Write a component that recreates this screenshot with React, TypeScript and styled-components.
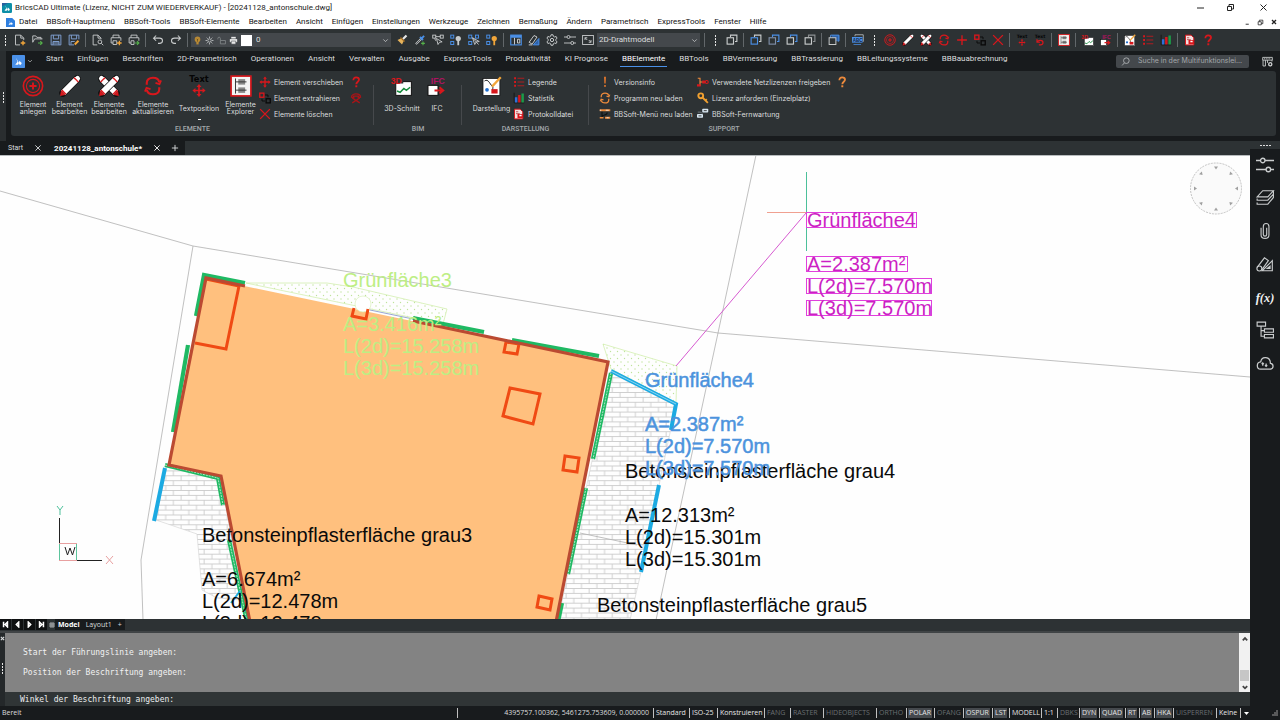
import React from "react";
import styled, { createGlobalStyle, css } from "styled-components";

const color = {
  panel: "#2d3234",
  dark: "#181b1d",
  field: "#44484c",
  text: "#dcdedf",
  red: "#d8171c",
  blue: "#4a90e8",
  line: "#c9cccd",
  amber: "#f2a63a",
};

const ui = `"Open Sans", "Noto Sans", sans-serif`;
const tabFont = `Roboto, "Open Sans", sans-serif`;
const labelFont = `Inter, Roboto, sans-serif`;

const GlobalStyle = createGlobalStyle`
  * { box-sizing: border-box; }
  html, body { margin: 0; padding: 0; background: ${color.dark}; }
  button, input, select { font: inherit; color: inherit; border: 0; padding: 0; margin: 0; background: none; }
  button { display: flex; align-items: center; cursor: pointer; }
`;

/* ---------- icons, all on a 16 × 16 grid ---------- */

const R = color.red;
const L = color.line;
const B = color.blue;
const A = color.amber;

const twoSquares = (back: string, front: string) => (
  <g fill="none" strokeWidth="1.5">
    <path d="M6 4V1.5h8.500V10H12" stroke={back} />
    <rect x="1.500" y="5" width="8.500" height="8.500" stroke={front} />
  </g>
);

const pencil = (
  <g>
    <path d="M2.800 13.200L13.200 2.800" stroke="#111" strokeWidth="5.200" strokeLinecap="round" />
    <path d="M3 13L13 3" stroke="#fff" strokeWidth="4.200" />
    <path d="M.8 15.200l.7-3.700 3 3z" fill={R} />
    <path d="M2 11l3 3M11 2l3 3" stroke={R} strokeWidth="1.200" />
    <path d="M13 3l.5-.5" stroke="#fff" strokeWidth="3.600" strokeLinecap="round" />
    <path d="M11 2l3 3" stroke={R} strokeWidth="1" />
  </g>
);

const reload = (c: string) => (
  <g fill="none" stroke={c} strokeWidth="1.700">
    <path d="M3 7V5.500C3 3 5 1.400 8 1.400s4.600 1.200 5 3.600" />
    <path d="M13 9v1.500c0 2.500-2 4.100-5 4.100s-4.600-1.200-5-3.600" />
    <path d="M10 5.500l3.200 1 1.300-3M6 10.500l-3.200-1-1.300 3" strokeWidth="1.400" />
  </g>
);

const question = (c: string) => (
  <g>
    <path d="M4.500 5.500C4.500 3 6 1.800 8.200 1.800c2.300 0 3.800 1.300 3.800 3.200 0 2.600-3.600 2.800-3.600 6" fill="none" stroke={c} strokeWidth="2.400" />
    <rect x="7.100" y="12.400" width="2.600" height="2.600" fill={c} />
  </g>
);

const squares4 = (
  <g fill="none" stroke={B} strokeWidth="1.300">
    <rect x="1" y="1.500" width="4" height="4" />
    <rect x="1" y="10" width="4" height="4" />
  </g>
);

const icons: Record<string, React.ReactNode> = {
  brics: (
    <g>
      <rect width="16" height="16" rx="1" fill={B} />
      <path d="M5 3.500l1.800 4.800L4 12h3.500l1-2.200zM9 7l3 2.800-1 2.200h-1.800L8.500 10z" fill="#fff" />
    </g>
  ),
  bricsDoc: (
    <g>
      <path d="M0 0h11l5 5v11H0z" fill="#2f7fe0" />
      <path d="M5.500 4l1.500 4.300L4.500 12H8l.8-2zM9.200 7.500l2.800 2.400L11 12H9.500L8.500 10z" fill="#fff" />
    </g>
  ),
  bricsApp: (
    <g>
      <rect width="16" height="16" rx="2" fill="#0d8fa8" />
      <path d="M0 16V5L10 0H0z" fill="#2a5f9f" />
      <path d="M5 3.500l1.800 4.800L4 12.500h3.500l1-2.200zM9.500 7l3 2.800-1 2.700H9.500L8.500 10z" fill="#fff" />
    </g>
  ),
  fileNew: (
    <g fill="none" stroke={L} strokeWidth="1.200">
      <path d="M8 14.500H2v-13h7l4 4V8M9 1.500v4h4" />
      <path d="M12 9v6M9 12h6" stroke={A} strokeWidth="1.800" />
    </g>
  ),
  fileOpen: (
    <g fill="none" stroke={L} strokeWidth="1.200">
      <path d="M1 11V2.500h4l1.500 2H12V7M1 11l2.500-4.500H14" />
      <path d="M8 12h5m-2-2.500L13.500 12 11 14.500" stroke="#55b04a" strokeWidth="1.500" />
    </g>
  ),
  save: (
    <g fill="none" stroke="#7f9fd0" strokeWidth="1.300">
      <path d="M1.500 1.500h13v13h-13z" />
      <path d="M4.500 1.500v5h7v-5M4 14.500V10h8v4.500M4 12h8" />
    </g>
  ),
  saveAs: (
    <g fill="none" stroke="#7f9fd0" strokeWidth="1.300">
      <path d="M14.500 7V1.500h-13v13H8" />
      <path d="M4.500 1.500v5h7v-5M4 14V10h5" />
      <path d="M9 14l5-5" stroke={A} strokeWidth="2.500" />
    </g>
  ),
  preview: (
    <g fill="none" stroke={L} strokeWidth="1.200">
      <path d="M7 14.500H1.500v-13H8l4 4V7M8 1.500v4h4" />
      <circle cx="10.500" cy="10.500" r="2.500" />
      <path d="M12.500 12.500L15 15" />
    </g>
  ),
  print: (
    <g fill="none" stroke={L} strokeWidth="1.200">
      <path d="M4 5V1.500h8V5M4 12H1.500V5h13v4M4 9h5v5H4z" />
      <path d="M12.500 9v6M9.500 12h6" stroke={A} strokeWidth="1.800" />
    </g>
  ),
  publish: (
    <g fill="none" stroke={L} strokeWidth="1.200">
      <path d="M4 5V1.500h8V5M4 12H1.500V5h13v4M4 9h4v5H4z" />
      <path d="M9 12h5m-2-2.500l2.500 2.500-2.500 2.500" stroke="#55b04a" strokeWidth="1.500" />
    </g>
  ),
  undo: <path d="M5.500 2L2 5.500 5.500 9M2 5.500h8c2.500 0 4 1.500 4 3.500s-1.500 3.500-4 3.500H8" fill="none" stroke={L} strokeWidth="1.400" />,
  redo: <path d="M10.500 2L14 5.500 10.500 9M14 5.500H6C3.500 5.500 2 7 2 9s1.500 3.500 4 3.500h2" fill="none" stroke={L} strokeWidth="1.400" />,
  bulb: (
    <g fill="#b98a35">
      <circle cx="8" cy="6" r="5" />
      <rect x="6" y="10.500" width="4" height="4.500" />
      <path d="M8 10V6M6.500 5L8 6.500 9.500 5" stroke="#4a3a18" fill="none" />
    </g>
  ),
  sun: (
    <g stroke={L} strokeWidth="1.500" fill="none">
      <circle cx="8" cy="8" r="3" />
      <path d="M8 1v2.500M8 12.500V15M1 8h2.500M12.500 8H15M3 3l1.800 1.800M11.200 11.200L13 13M13 3l-1.800 1.800M4.800 11.200L3 13" />
    </g>
  ),
  lock: <path d="M6 14h9V8H6zM6 8V4.500C6 3 5 2 3.700 2S1.500 3 1.500 4.500V6" fill="none" stroke="#8b9092" strokeWidth="1.300" />,
  printer: (
    <g fill="#e8e8e8">
      <rect x="4" y="1.500" width="8" height="3" />
      <path d="M1.500 5.500h13V11h-13z" />
      <path d="M4 9h8v5.500H4z" stroke={color.field} />
    </g>
  ),
  brush: (
    <g>
      <path d="M2 8l5-2.500L10.500 9 8 14z" fill="#e6b35c" />
      <path d="M9 7l5-5" stroke="#e8e8e8" strokeWidth="2.800" />
      <path d="M6 4.500l5.500 5.500" stroke="#a06a20" strokeWidth="1.600" />
    </g>
  ),
  dropper: (
    <g>
      <path d="M2.500 13.500L10 6" stroke={L} strokeWidth="2.600" />
      <path d="M3 13l6-6" stroke="#2d3234" strokeWidth="1" />
      <path d="M8 4l4 4M10.500 5.500L13.500 2.500" stroke={B} strokeWidth="2.500" />
      <path d="M12 10v5M9.500 12.500h5" stroke="#55b04a" strokeWidth="1.500" />
    </g>
  ),
  select: (
    <g fill="none" stroke={L} strokeWidth="1.200">
      <rect x="1" y="1.500" width="4" height="4" />
      <rect x="11" y="1.500" width="4" height="4" />
      <path d="M5 3.500h6M3.500 6l1.500 3M6 6l2 8 2-3 3.500-.5z" />
    </g>
  ),
  isolate: (
    <g>
      {squares4}
      <circle cx="11" cy="6" r="3.500" fill={L} />
      <rect x="9.800" y="9" width="2.400" height="6" fill={L} />
    </g>
  ),
  deselect: (
    <g>
      {squares4}
      <rect x="10" y="1.500" width="4" height="4" fill="none" stroke={B} strokeWidth="1.300" />
      <path d="M6 5l3 9 2-3.500 4-.5zM6 5l8 9" fill="none" stroke={L} strokeWidth="1.200" />
    </g>
  ),
  unisolate: (
    <g>
      {squares4}
      <circle cx="11" cy="6" r="3.500" fill={A} />
      <rect x="9.800" y="9" width="2.400" height="6" fill={A} />
    </g>
  ),
  table: (
    <g>
      <rect x="1" y="1.500" width="14" height="13" fill="none" stroke={B} strokeWidth="1.500" />
      <rect x="1" y="1.500" width="14" height="3.500" fill={B} />
      <path d="M6 5v9M10 7v5h3V7z" stroke={L} fill="none" strokeWidth="1.300" />
    </g>
  ),
  parts: (
    <g fill="none" strokeWidth="1.300">
      <path d="M1.500 11L8 2l4 2-6.500 9.500z" stroke={L} />
      <path d="M7 14.500h7.500V6z" stroke={B} fill="#2f62a8" />
      <path d="M1 14.500h5" stroke={L} />
    </g>
  ),
  gear: (
    <g fill="none" stroke={L} strokeWidth="1.300">
      <path d="M6.700 1h2.600l.5 2 1.700 1 2-.7 1.200 2.200-1.500 1.500v2l1.500 1.500-1.200 2.200-2-.7-1.700 1-.5 2H6.700l-.5-2-1.700-1-2 .7-1.200-2.200L2.800 9V7L1.300 5.500l1.200-2.200 2 .7 1.700-1z" />
      <circle cx="8" cy="8" r="2.200" />
    </g>
  ),
  sliders: (
    <g fill="none" stroke={L} strokeWidth="1.200">
      <path d="M0 4h4M8 4h8M0 12h9M13 12h3" />
      <circle cx="6" cy="4" r="2" />
      <circle cx="11" cy="12" r="2" />
    </g>
  ),
  screen: (
    <g fill="none" stroke={L} strokeWidth="1.200">
      <rect x=".8" y="2" width="14.400" height="12" />
      <path d="M4 8V5h3M12 8v3H9M4 5l3 3M12 11L9 8" />
    </g>
  ),
  sqGrey: twoSquares(L, L),
  sqFront: twoSquares(L, B),
  sqBack: twoSquares(B, "#7f8fa8"),
  sqAbove: twoSquares(B, L),
  sqUnder: twoSquares("#8c9092", L),
  sqFilled: (
    <g>
      <rect x="5" y="1.500" width="10" height="8" fill="#2f62a8" />
      <g fill="none" stroke={L} strokeWidth="1.300">
        <path d="M3.500 5V1.500h11v8H13" stroke={B} />
        <rect x="1.500" y="5" width="9" height="9" fill={color.panel} />
      </g>
    </g>
  ),
  abc: (
    <g>
      <path d="M4 3V1h11v9h-1" stroke={L} fill="none" />
      <rect x="0" y="4" width="14" height="7.500" fill={B} />
      <text x="1" y="10" fontSize="6" fontWeight="700" fontFamily="Liberation Sans, sans-serif" fill="#14243c">ABC</text>
      <path d="M2 14h10" stroke={B} />
    </g>
  ),
  create: (
    <g fill="none" stroke={R}>
      <circle cx="8" cy="8" r="7" strokeWidth="1.200" />
      <circle cx="8" cy="8" r="4.800" strokeWidth=".8" />
      <path d="M8 5.400v5.200M5.400 8h5.200" strokeWidth="1.400" />
    </g>
  ),
  pencil,
  pencils: (
    <g>
      <g transform="matrix(-1 0 0 1 16 0)">{pencil}</g>
      {pencil}
    </g>
  ),
  reload: reload(R),
  reloadAmber: reload("#ec8a3c"),
  move: <path d="M8 .5l2.500 3H8.900v3.600h3.600V5.500l3 2.500-3 2.500V8.900H8.900v3.600h1.600L8 15.500l-2.500-3h1.600V8.900H3.500v1.600L.5 8l3-2.500v1.600h3.600V3.500H5.500z" fill={R} />,
  plus: <path d="M8 1.500v13M1.500 8h13" stroke={R} strokeWidth="1.800" />,
  extract: (
    <g fill="none" strokeWidth="1.800">
      <rect x="1" y="1.500" width="5.500" height="5.500" stroke={R} />
      <rect x="9.500" y="9" width="5.500" height="5.500" stroke="#0a0a0a" />
      <path d="M8 4h4v3M4 9v3h4" stroke="#0a0a0a" strokeWidth="1.200" />
    </g>
  ),
  cross: <path d="M1.500 1.500l13 13M14.500 1.500l-13 13" stroke={R} strokeWidth="1.800" />,
  textPos: (
    <g>
      <text x="8" y="5" fontSize="6" fontWeight="700" textAnchor="middle" fontFamily="DejaVu Sans, sans-serif" fill="#050505">Text</text>
      <path d="M8 6.500l1.800 2.200H8.600v2h2V9.500l2.200 1.800-2.200 1.800v-1.200h-2v2h1.200L8 16l-1.800-2.100h1.200v-2h-2v1.200l-2.200-1.800 2.200-1.800v1.200h2v-2H6.200z" fill={R} />
    </g>
  ),
  textBack: (
    <g>
      <text x="8" y="5" fontSize="6" fontWeight="700" textAnchor="middle" fontFamily="DejaVu Sans, sans-serif" fill="#050505">Text</text>
      <path d="M4 7v4h4M4.500 10.500C5.500 8 12 7.500 12 11.500c0 2-2 3-5.500 3" fill="none" stroke={R} strokeWidth="1.600" />
    </g>
  ),
  explorer: (
    <g>
      <rect x=".8" y=".8" width="14.400" height="14.400" fill="#f4f4f4" stroke={R} strokeWidth="1.200" />
      <rect x="6" y="3" width="5" height="4" fill="#888" />
      <rect x="6" y="9" width="5" height="4" fill="#888" />
      <path d="M4 2.500v11M4 5h8M4 11h8" stroke="#333" strokeWidth=".7" />
    </g>
  ),
  section3d: (
    <g>
      <rect x="3" y="4.500" width="12.500" height="11" fill="#fff" stroke="#111" strokeWidth=".8" />
      <rect x="0" y="0" width="9" height="6" fill={color.panel} />
      <text x="-1" y="6" fontSize="7" fontWeight="700" fontFamily="Liberation Sans, sans-serif" fill={R}>3D</text>
      <path d="M4 12l2.500 1 3-3 2 1.500 3-2.500" stroke="#168a3c" fill="none" strokeWidth="1.200" />
    </g>
  ),
  ifc: (
    <g>
      <text x="3" y="6" fontSize="7" fontWeight="700" fontFamily="Liberation Sans, sans-serif" fill="#b01260">IFC</text>
      <rect x=".8" y="7.500" width="8" height="8" fill="#fff" stroke="#111" strokeWidth=".8" />
      <path d="M6 11.500h6m-2-2.500l3 2.500-3 2.500" stroke={R} fill="none" strokeWidth="1.600" />
    </g>
  ),
  display: (
    <g>
      <rect x=".8" y="2" width="13.500" height="13.500" fill="#fff" stroke="#111" strokeWidth=".6" />
      <path d="M2 4c3-2 4 2 6 4s-1 3 1 4" stroke="#111" fill="none" strokeWidth=".8" />
      <circle cx="4" cy="11" r="1.500" fill="#1f6fd0" />
      <rect x="7.500" y="10.500" width="5" height="3.500" fill={R} />
      <path d="M8 8.500l7-7.500" stroke={A} strokeWidth="1.800" />
    </g>
  ),
  legend: (
    <g stroke={R} strokeWidth="1.600">
      <path d="M6 3h9M6 8h9M6 13h9" strokeWidth="1" />
      <path d="M1.500 3H4M1.500 8H4M1.500 13H4" strokeWidth="2.600" />
    </g>
  ),
  stats: (
    <g>
      <path d="M1.500 1v13.500H15" stroke="#111" fill="none" />
      <rect x="2.500" y="7" width="3.300" height="7" fill="#2f6fd8" />
      <rect x="6.800" y="4" width="3.300" height="10" fill={R} />
      <rect x="11.200" y="2" width="3.300" height="12" fill="#1c9a48" />
    </g>
  ),
  protocol: (
    <g>
      <path d="M2 1.500h7.500L13 5v9.500H2z" fill="#f6dede" stroke={R} strokeWidth="1.300" />
      <path d="M4 5h3M4 7.500h5" stroke="#a33" />
      <rect x="6" y="8" width="7.500" height="5.500" fill={R} />
      <rect x="8.500" y="9" width="3" height="2" fill="#fff" />
    </g>
  ),
  help: question(R),
  helpAmber: question("#ec8a3c"),
  phone: (
    <g fill="none" stroke="#a81418" strokeWidth="1.800">
      <path d="M2 7c0-3 3-4.500 6-4.500S14 4 14 7l-3 .5V5.500H5v2z" />
      <path d="M3 14.500L13 8M13 14.500L3 8" />
    </g>
  ),
  alert: (
    <g fill="#ec7a2c">
      <path d="M6.800 1h2.400l-.4 9H7.200z" />
      <rect x="7" y="12" width="2" height="2.500" />
    </g>
  ),
  menuReload: (
    <g>
      <path d="M1 3h14M8 13h7" stroke="#ec8a3c" strokeWidth="2.800" />
      <path d="M1 3h2M9 3h4M10 13h3" stroke="#f4e4d4" strokeWidth="1.200" />
      <path d="M4 12c0-4 7-1 7-6M4 5v8" stroke="#111" fill="none" strokeWidth="1.400" />
      <path d="M1 13h5" stroke="#ec8a3c" strokeWidth="2" />
    </g>
  ),
  release: (
    <g>
      <path d="M1 3h3v10M4 8h7" stroke="#ec8a3c" fill="none" strokeWidth="1.500" />
      <rect x="0" y="11" width="5" height="3" fill={R} />
      <rect x="7" y="6" width="3.500" height="4" fill={R} />
      <circle cx="13" cy="8" r="2" fill="none" stroke={R} strokeWidth="1.500" />
    </g>
  ),
  key: (
    <g>
      <circle cx="5" cy="5" r="3.200" fill="none" stroke="#f0a030" strokeWidth="2.600" />
      <path d="M7 7l7.500 7.500M11 11.500l2-2" stroke="#f0a030" strokeWidth="2.400" />
    </g>
  ),
  remote: (
    <g>
      <rect x="7" y="1" width="8" height="5" rx="1" fill="#d8e6f0" />
      <rect x="0" y="8" width="8" height="5" rx="1" fill="#d8e6f0" />
      <path d="M9 3.500h4M2 10.500h4M1 15h7M9 8h6" stroke="#333" strokeWidth="1.200" />
      <path d="M1 5.500h4l2 2" stroke="#88929a" fill="none" />
    </g>
  ),
  searchIcon: (
    <g fill="none" stroke="#b4b8ba" strokeWidth="1.500">
      <circle cx="9.500" cy="6.500" r="5" />
      <path d="M6 10.500L2 15" />
    </g>
  ),
  customize: (
    <g fill="none" stroke={L} strokeWidth="1.300">
      <path d="M1 2h14v4H1zM5 6v8.500H1.500V6M8 6v4M14.500 6v2" />
      <path d="M3 4h10" strokeDasharray="1.500 1" />
      <circle cx="12" cy="12" r="2.300" strokeWidth="2" />
    </g>
  ),
  layers: (
    <g fill="none" stroke={L} strokeWidth="1">
      <path d="M6 1.500h9.500L10.500 7H1z" />
      <path d="M15.500 1.500v3L10.500 10H1V8.500M15.500 4.500v3L10.500 13.500H1V12M15.500 7.500l-5 6" />
    </g>
  ),
  clip: <path d="M4.500 5v6.500c0 4 7 4 7 0V4c0-3.500-5-3.500-5 0v7c0 2 3 2 3 0V5" fill="none" stroke={L} strokeWidth="1" />,
  library: (
    <g fill="none" stroke={L} strokeWidth="1">
      <path d="M1 11L7.500 2.500 11 5l-6 8.500" />
      <circle cx="3" cy="12" r="2.200" />
      <path d="M14.500 5v9H5.500zM12.500 10v2h-2.500z" />
    </g>
  ),
  fx: (
    <text x="8" y="12" fontSize="11" fontWeight="700" fontStyle="italic" textAnchor="middle" fontFamily="Liberation Serif, serif" fill="#f0f0f0">f(x)</text>
  ),
  structure: (
    <g fill="none" stroke={L} strokeWidth="1">
      <path d="M1 1h7.500v3.500H1zM7.500 7h8v3h-8zM7.500 12h8v3h-8zM4.500 4.500v9h3M4.500 8.500h3" />
    </g>
  ),
  cloud: (
    <g fill="none" stroke={L} strokeWidth="1.100">
      <path d="M4 13.500h8.500c3.500 0 3.500-5 .3-5.200C12.800 2 5 1.500 4.200 7 .2 7.300.2 13.200 4 13.500z" />
      <path d="M6 10.500V8M5 9l1-1 1 1M9 8.500V11M8 10l1 1 1-1" />
    </g>
  ),
  chevron: <path d="M3 5.500l5 5 5-5" fill="none" stroke={L} strokeWidth="1.800" />,
};

const Svg = styled.svg`
  display: block;
  flex: none;
  overflow: visible;
`;

const Icon = ({ name, size = 12 }: { name: string; size?: number }) => (
  <Svg width={size} height={size} viewBox="0 0 16 16" aria-hidden="true">
    {icons[name]}
  </Svg>
);

/* ---------- window frame ---------- */

const Window = styled.div`
  display: flex;
  flex-direction: column;
  height: 100vh;
  font-family: ${ui};
  color: ${color.text};
  overflow: hidden;
`;

const TitleBar = styled.header`
  display: flex;
  align-items: center;
  height: 15px;
  padding: 0 0 0 2px;
  gap: 3px;
  background: #fff;
  color: #1a1a1a;
  font-family: ${tabFont};
`;

const Title = styled.h1`
  flex: 1;
  margin: 0;
  font-size: 8px;
  font-weight: 400;
  line-height: 14px;
`;

const WindowButton = styled.button<{ $w: number }>`
  width: ${(p) => p.$w}px;
  height: 14px;
  justify-content: center;
  color: #222;
`;

const MenuBar = styled.nav`
  display: flex;
  align-items: center;
  height: 14px;
  padding-left: 6px;
  background: #fff;
  color: #111;
  font-family: ${tabFont};
  font-size: 8px;
  line-height: 12px;
`;

const MenuList = styled.div`
  display: flex;
  flex: 1;
  gap: 9px;
  padding-left: 4px;
`;

const Bar = styled.div`
  display: flex;
  align-items: center;
  height: 22px;
  background: ${color.panel};
`;

const ToolButton = styled.button`
  width: 18px;
  height: 20px;
  justify-content: center;
  flex: none;
`;

const Separator = styled.span`
  width: 6px;
  height: 14px;
  flex: none;
  background: linear-gradient(90deg, transparent 2px, #62676a 2px, #62676a 3px, transparent 3px);
`;

const Grip = styled.span<{ $w: number }>`
  width: ${(p) => p.$w}px;
  height: 11px;
  flex: none;
  display: flex;
  justify-content: center;
  &::before {
    content: "";
    width: 1px;
    background: repeating-linear-gradient(180deg, #e4e4e4 0 2px, transparent 2px 3px);
  }
`;

const Combo = styled.label<{ $w: number }>`
  display: flex;
  align-items: center;
  width: ${(p) => p.$w}px;
  height: 14px;
  margin: 0 2px 0 0;
  padding: 0 2px;
  flex: none;
  background: ${color.field};
  font-family: ${tabFont};
  font-size: 8px;
  select {
    appearance: none;
    flex: 1;
    min-width: 0;
    line-height: 12px;
    outline: none;
  }
  option { color: #000; }
`;

const Swatch = styled.span`
  width: 11px;
  height: 11px;
  margin: 0 4px 0 3px;
  background: #fff;
`;

const LayerStates = styled.span`
  display: flex;
  gap: 3px;
`;

/* ---------- ribbon ---------- */

const TabStrip = styled.div`
  display: flex;
  align-items: center;
  height: 20px;
  padding: 0 4px 0 12px;
  background: ${color.dark};
  font-family: ${tabFont};
  font-size: 8px;
  line-height: 10px;
`;

const AppButton = styled.button`
  width: 32px;
  gap: 2px;
`;

const Tabs = styled.div`
  display: flex;
  flex: 1;
  gap: 10px;
`;

const Tab = styled.button<{ $active?: boolean }>`
  height: 14px;
  padding: 0 2px;
  margin-top: -3px;
  white-space: nowrap;
  border-bottom: 1px solid ${(p) => (p.$active ? color.blue : "transparent")};
  color: ${(p) => (p.$active ? "#fff" : color.text)};
`;

const SearchBox = styled.label`
  display: flex;
  align-items: center;
  gap: 8px;
  width: 133px;
  height: 13px;
  margin: 0 9px 0 0;
  padding: 0 5px;
  border-radius: 2px;
  background: ${color.field};
  font-family: ${labelFont};
  font-size: 7px;
  input {
    flex: 1;
    min-width: 0;
    outline: none;
    text-overflow: ellipsis;
  }
  input::placeholder { color: #a3a7aa; opacity: 1; }
`;

const RibbonArea = styled.div`
  display: flex;
  padding: 0 4px 5px 0;
  background: ${color.dark};
`;

const RibbonGrip = styled.div`
  display: flex;
  align-items: center;
  justify-content: center;
  width: 6px;
  margin: -20px 5px -5px 0;
  padding-top: 2px;
  background: #2a2e30;
`;

const Ribbon = styled.div`
  display: flex;
  flex: 1;
  height: 65px;
  border-radius: 3px;
  background: ${color.panel};
  font-family: ${labelFont};
  font-size: 7px;
`;

const Group = styled.section<{ $w: number }>`
  position: relative;
  display: flex;
  flex-direction: column;
  width: ${(p) => p.$w}px;
  flex: none;
  &::after {
    content: "";
    position: absolute;
    right: 0;
    top: 14px;
    height: 40px;
    width: 1px;
    background: #46494c;
  }
  &:last-child::after { display: none; }
`;

const GroupBody = styled.div<{ $pad: number }>`
  display: flex;
  height: 53px;
  padding-top: 4px;
  padding-left: ${(p) => p.$pad}px;
`;

const GroupTitle = styled.h2`
  margin: 0;
  font-family: ${tabFont};
  font-size: 7px;
  font-weight: 500;
  line-height: 10px;
  text-align: center;
  color: #a4a8ab;
`;

const BigButton = styled.button<{ $w: number }>`
  flex-direction: column;
  width: ${(p) => p.$w}px;
  height: 46px;
  gap: 3px;
  flex: none;
`;

const BigIcon = styled.span`
  display: flex;
  align-items: center;
  height: 22px;
`;

const BigLabel = styled.span`
  display: flex;
  flex-direction: column;
  justify-content: center;
  height: 16px;
  line-height: 7px;
  text-align: center;
  white-space: nowrap;
`;

const SmallColumn = styled.div<{ $w: number }>`
  display: flex;
  flex-direction: column;
  width: ${(p) => p.$w}px;
  flex: none;
`;

const SmallButton = styled.button`
  height: 16px;
  margin-top: -1px;
  margin-bottom: 1px;
  gap: 3px;
  white-space: nowrap;
`;

const SplitMark = styled.span`
  width: 3px;
  height: 1px;
  background: #fff;
`;

/* ---------- workspace ---------- */

const Body = styled.div`
  display: flex;
  flex: 1;
  min-height: 0;
`;

const Main = styled.main`
  display: flex;
  flex-direction: column;
  flex: 1;
  min-width: 0;
`;

const DocTabs = styled.div`
  display: flex;
  align-items: stretch;
  height: 15px;
  background: ${color.panel};
  border-bottom: 1px solid #b8bcbe;
  font-family: ${tabFont};
  font-size: 7px;
`;

const DocTab = styled.div<{ $active?: boolean }>`
  display: flex;
  align-items: center;
  gap: 11px;
  padding: 0 6px 0 8px;
  background: ${color.dark};
  ${(p) =>
    p.$active &&
    css`
      font-size: 8px;
      font-weight: 700;
      color: #fff;
      padding: 0 2px 0 6px;
    `}
`;

const Glyph = styled.svg`
  display: block;
  fill: none;
  stroke: currentColor;
`;

const Canvas = styled.div`
  flex: 1;
  min-height: 0;
  background: #fefefe;
  svg { display: block; width: 100%; height: 100%; }
`;

const LayoutTabs = styled.div`
  display: flex;
  align-items: center;
  height: 14px;
  padding-bottom: 1px;
  background: ${color.panel};
  border-bottom: 2px solid #404446;
  font-size: 7px;
`;

const NavButton = styled.button`
  width: 11px;
  height: 11px;
  margin-right: 1px;
  justify-content: center;
  background: #0e1011;
  color: #fff;
`;

const GridMark = styled.button`
  width: 7px;
  justify-content: center;
`;

const LayoutTab = styled.button<{ $active?: boolean }>`
  height: 11px;
  padding: 0 3px;
  background: ${color.dark};
  font-weight: ${(p) => (p.$active ? 700 : 400)};
  color: ${(p) => (p.$active ? "#fff" : color.text)};
`;

const Command = styled.section`
  display: flex;
  height: 73px;
  background: #303536;
  font-family: "DejaVu Sans Mono", monospace;
  font-size: 8px;
`;

const CommandEdge = styled.div`
  display: flex;
  flex-direction: column;
  align-items: center;
  width: 5px;
  gap: 22px;
  padding-top: 3px;
  background: #24282a;
`;

const CommandMain = styled.div`
  display: flex;
  flex-direction: column;
  flex: 1;
`;

const History = styled.div`
  display: flex;
  height: 59px;
  background: #838383;
`;

const Lines = styled.div`
  flex: 1;
  padding: 10px 0 0 18px;
  line-height: 20px;
  color: #f2f2f2;
`;

const ScrollTrack = styled.div`
  display: flex;
  flex-direction: column;
  align-items: center;
  width: 11px;
  background: #f1f1f1;
  color: #444;
  button { width: 11px; height: 11px; justify-content: center; }
`;

const ScrollThumb = styled.span`
  width: 9px;
  height: 11px;
  margin-top: auto;
  background: #c6c6c6;
`;

const Prompt = styled.label`
  display: flex;
  align-items: center;
  height: 14px;
  padding-left: 15px;
  gap: 4px;
  color: #eceeee;
  input { flex: 1; outline: none; }
`;

const Sidebar = styled.aside`
  display: flex;
  flex-direction: column;
  align-items: center;
  width: 30px;
  flex: none;
  background: ${color.dark};
`;

const SidebarHandle = styled.div`
  align-self: stretch;
  display: flex;
  align-items: center;
  justify-content: center;
  height: 8px;
  margin-bottom: 7px;
  background: ${color.panel};
  &::before {
    content: "";
    width: 11px;
    height: 1px;
    background: repeating-linear-gradient(90deg, #ddd 0 2px, transparent 2px 3px);
  }
`;

const SideButton = styled.button`
  width: 30px;
  height: 33px;
  padding-bottom: 15px;
  justify-content: center;
`;

const StatusBar = styled.footer`
  display: flex;
  align-items: center;
  height: 14px;
  padding-left: 2px;
  background: ${color.dark};
  font-size: 7px;
  line-height: 10px;
`;

const StatusText = styled.span`
  flex: 1;
`;

const Coordinates = styled.span`
  width: 196px;
  padding-right: 4px;
  text-align: right;
  border-left: 1px solid #c0c0c0;
`;

const Cell = styled.button<{ $w: number; $state: "on" | "off" | "plain" }>`
  width: ${(p) => p.$w}px;
  height: 10px;
  flex: none;
  padding-left: 1px;
  border-left: 1px solid #c0c0c0;
  white-space: nowrap;
  color: ${(p) => (p.$state === "off" ? "#6a6f72" : "#e6e6e6")};
  span {
    padding: 0 1px;
    background: ${(p) => (p.$state === "on" ? "#45494d" : "none")};
  }
`;

const ResizeCorner = styled.span`
  display: flex;
  width: 40px;
  height: 10px;
  justify-content: space-between;
  align-items: center;
  padding: 0 2px 0 3px;
  border-left: 1px solid #c0c0c0;
`;

/* ---------- data ---------- */

const menus = [
  "Datei", "BBSoft-Hauptmenü", "BBSoft-Tools", "BBSoft-Elemente", "Bearbeiten", "Ansicht", "Einfügen", "Einstellungen",
  "Werkzeuge", "Zeichnen", "Bemaßung", "Ändern", "Parametrisch", "ExpressTools", "Fenster", "Hilfe",
];

const ribbonTabs = [
  "Start", "Einfügen", "Beschriften", "2D-Parametrisch", "Operationen", "Ansicht", "Verwalten", "Ausgabe", "ExpressTools",
  "Produktivität", "KI Prognose", "BBElemente", "BBTools", "BBVermessung", "BBTrassierung", "BBLeitungssysteme", "BBBauabrechnung",
];

const fileTools = ["fileNew", "fileOpen", "save", "saveAs", "|", "preview", "print", "publish", "|", "undo", "redo", "|"];
const editTools = [
  "brush", "dropper", "select", "isolate", "deselect", "unisolate", "|", "table", "parts", "gear", "sliders", "screen",
];
const orderTools = ["sqGrey", "|", "sqFront", "sqBack", "sqAbove", "sqUnder", "|", "sqFilled", "|", "abc"];
const elementTools = [
  "create", "pencil", "pencils", "reload", "plus", "extract", "cross", "|", "textPos", "textBack", "|", "explorer", "|",
  "section3d", "ifc", "|", "display", "legend", "stats", "|", "protocol", "help",
];

const cells: [string, number, "on" | "off" | "plain"][] = [
  ["Standard", 36, "plain"], ["ISO-25", 28, "plain"], ["Konstruieren", 47, "plain"], ["FANG", 26, "off"], ["RASTER", 33, "off"],
  ["HIDEOBJECTS", 53, "off"], ["ORTHO", 30, "off"], ["POLAR", 28, "on"], ["OFANG", 29, "off"], ["OSPUR", 29, "on"],
  ["LST", 17, "on"], ["MODELL", 32, "plain"], ["1:1", 16, "plain"], ["DBKS", 22, "off"], ["DYN", 20, "on"], ["QUAD", 26, "on"],
  ["RT", 14, "on"], ["AB", 15, "on"], ["HKA", 19, "on"], ["UISPERREN", 43, "off"], ["Keine", 24, "plain"],
];

const Tools = ({ names }: { names: string[] }) => (
  <>
    {names.map((n, i) =>
      n === "|" ? (
        <Separator key={i} />
      ) : (
        <ToolButton key={i} aria-label={n}>
          <Icon name={n} />
        </ToolButton>
      ),
    )}
  </>
);

const Big = ({ icon, lines, w, size = 22, split }: { icon: string; lines: string[]; w: number; size?: number; split?: boolean }) => (
  <BigButton $w={w}>
    <BigIcon>
      <Icon name={icon} size={size} />
    </BigIcon>
    <BigLabel>
      {lines.map((l) => (
        <span key={l}>{l}</span>
      ))}
    </BigLabel>
    {split && <SplitMark />}
  </BigButton>
);

const Small = ({ w, items }: { w: number; items: [string, string][] }) => (
  <SmallColumn $w={w}>
    {items.map(([icon, label]) => (
      <SmallButton key={icon} aria-label={label || icon}>
        <Icon name={icon} />
        {label}
      </SmallButton>
    ))}
  </SmallColumn>
);

/* ---------- drawing ---------- */

const Note = ({ x, y, lines, fill, strong }: { x: number; y: number; lines: string[]; fill: string; strong?: boolean }) => (
  <g fill={fill} stroke={strong ? fill : "none"} strokeWidth=".5" fontSize="20" fontFamily="Liberation Sans, Arial, sans-serif">
    {lines.map((l, i) => (
      <text key={l} x={x} y={y + (i ? 22 : 0) + i * 22}>
        {l}
      </text>
    ))}
  </g>
);

const Wall = ({ d, hatched }: { d: string; hatched?: boolean }) => (
  <g fill="none">
    <path d={d} stroke="#1fb963" strokeWidth="4.200" />
    {hatched && <path d={d} stroke="#d8f2e2" strokeWidth=".8" strokeDasharray="2 1" />}
  </g>
);

const Drawing = () => (
  <svg viewBox="0 156 1250 463" preserveAspectRatio="xMinYMin slice" role="img" aria-label="Lageplan Antonschule">
    <defs>
      <pattern id="brick" width="15.400" height="9.800" patternUnits="userSpaceOnUse">
        <path d="M0 .5h15.400M0 5.400h15.400M4 .5v4.900M11.700 5.400v4.900" stroke="#c4c4c4" strokeWidth=".8" fill="none" />
      </pattern>
      <pattern id="dots" width="7" height="7" patternUnits="userSpaceOnUse">
        <circle cx="1.500" cy="1.500" r=".7" fill="#bfe39a" />
        <circle cx="5" cy="5" r=".7" fill="#bfe39a" />
      </pattern>
    </defs>

    <g fill="none" stroke="#b0b0b0" strokeWidth=".8">
      <path d="M0 191L193 246L718 333L1250 377" />
      <path d="M193 246L141 560L143 620" />
      <path d="M756 155L718 333L656 620" />
    </g>

    <path d="M611 372L676 404L641 572L630 620H558z" fill="url(#brick)" stroke="#d0d0d0" strokeWidth=".6" />
    <path d="M580 533L637 545" stroke="#b0b0b0" strokeWidth=".8" />
    <path d="M166 467L221 477L242 600L217 598L202 590L197 534L156 520z" fill="url(#brick)" stroke="#d0d0d0" strokeWidth=".6" />

    <path d="M206 278L608 362L556 620H249L221 476L169 465z" fill="#ffc07e" />
    <path d="M246 283L327 283L353 287L447 309L443 324L413 318L246 285z" fill="#fefefe" />
    <path d="M246 283L327 283L353 287L447 309L443 324z" fill="url(#dots)" stroke="#d3efb0" strokeWidth=".8" />
    <path d="M603 344L677 366L676 403L611 369z" fill="url(#dots)" stroke="#d3efb0" strokeWidth=".8" />
    <path d="M370 310L413 319" stroke="#7f8fc8" strokeWidth=".8" />

    <g fill="none" stroke="#f04a14" strokeWidth="3">
      <path d="M206 279L239 286L226 349L195 343" />
      <path d="M506 342L504 352L517 354L519 344z" />
      <path d="M510 388L540 394L533 424L503 416z" />
      <path d="M565 456L579 458L577 472L563 470z" />
      <path d="M539 596L552 599L550 610L537 607z" />
    </g>
    <circle cx="363" cy="304" r="8" fill="#fff" stroke="#d3efb0" strokeWidth=".6" />
    <path d="M354 308L352 316L366 319L368 309" fill="none" stroke="#f04a14" strokeWidth="3" />

    <Wall d="M245 283L204 275L196 316" />
    <Wall d="M188 345L173 432" />
    <Wall d="M413 318L484 332" />
    <Wall d="M512 340L599 356" />
    <Wall hatched d="M611 373L593 459" />
    <Wall hatched d="M586 488L568 574" />
    <Wall d="M562 603L558 622" />
    <Wall hatched d="M165 465L218 478L223 505" />
    <Wall hatched d="M229 540L247 622" />

    <g fill="none" stroke="#bb4a32" strokeWidth="3.200">
      <path d="M245 286L206 278L169 465L221 476L250 622" />
      <path d="M413 321L608 362L556 622" />
    </g>

    <g fill="none" stroke="#1caae2" strokeWidth="4">
      <path d="M611 371L676 404L671 430" />
      <path d="M611 371L676 404" stroke="#a8e0f4" strokeWidth=".8" />
      <path d="M659 485L641 572" />
      <path d="M165 468L154 521" />
      <path d="M240 591L231 603" strokeWidth="2" />
    </g>

    <Note x={343} y={287} fill="#bdee84" lines={["Grünfläche3", "A=3.416m²", "L(2d)=15.258m", "L(3d)=15.258m"]} />
    <Note x={625} y={478} fill="#0a0a0a" lines={["Betonsteinpflasterfläche grau4", "A=12.313m²", "L(2d)=15.301m", "L(3d)=15.301m"]} />
    <Note x={597} y={612} fill="#0a0a0a" lines={["Betonsteinpflasterfläche grau5"]} />
    <Note x={202} y={542} fill="#0a0a0a" lines={["Betonsteinpflasterfläche grau3", "A=6.674m²", "L(2d)=12.478m", "L(3d)=12.478m"]} />
    <Note x={645} y={387} fill="#4c93dd" strong lines={["Grünfläche4", "A=2.387m²", "L(2d)=7.570m", "L(3d)=7.570m"]} />

    <path d="M767 212.500H846" stroke="#f0a090" strokeWidth="1" />
    <path d="M806.500 172V251" stroke="#4cc09a" strokeWidth="1" />
    <path d="M806 213L676 366" stroke="#d65ad0" strokeWidth="1" />
    <g fill="none" stroke="#e040dc" strokeWidth="1">
      <rect x="806.500" y="212.500" width="110" height="15" />
      <rect x="806.500" y="256.500" width="101" height="15" />
      <rect x="806.500" y="278.500" width="125" height="15" />
      <rect x="806.500" y="300.500" width="125" height="15" />
    </g>
    <Note x={807} y={227} fill="#cc1fc4" lines={["Grünfläche4", "A=2.387m²", "L(2d)=7.570m", "L(3d)=7.570m"]} />

    <g fill="none" strokeWidth="1">
      <path d="M59.500 518V543M76 560.500H102" stroke="#222" />
      <path d="M59.500 543V561M76.500 543V561" stroke="#5cc49c" />
      <path d="M59 543.500H77M59 560.500H77" stroke="#e8a0a0" />
      <path d="M57 506l3 4 3-4M60 510v5" stroke="#4cc09a" />
      <path d="M106 556l7 8M113 556l-7 8" stroke="#e8a0a0" />
      <path d="M65 547l2.500 8 2.500-7 2.500 7 2.500-8" stroke="#222" />
    </g>

    <g fill="#a0a0a0">
      <circle cx="1216" cy="188.500" r="25.500" fill="#fafafa" stroke="#b4b4b4" strokeWidth=".8" strokeDasharray="2 1" />
      {[0, 45, 90, 135, 180, 225, 270, 315].map((a) => (
        <path key={a} d="M1214 166.500h4l-2 3z" transform={`rotate(${a} 1216 188.500)`} />
      ))}
    </g>
  </svg>
);

const Line = ({ d, w = 9, sw = 1 }: { d: string; w?: number; sw?: number }) => (
  <Glyph width={w} height={w} viewBox="0 0 9 9" strokeWidth={sw} aria-hidden="true">
    <path d={d} />
  </Glyph>
);

const closeX = "M1.500 1.500l6 6M7.500 1.500l-6 6";
const restore = "M1.500 3.500h4v4h-4zM3 3.500v-2h4.500V6H5.500";

export default function App() {
  return (
    <Window>
      <GlobalStyle />
      <TitleBar>
        <Icon name="bricsApp" size={10} />
        <Title>BricsCAD Ultimate (Lizenz, NICHT ZUM WIEDERVERKAUF) - [20241128_antonschule.dwg]</Title>
        <WindowButton $w={26} aria-label="Minimieren"><Line d="M1 5h7" /></WindowButton>
        <WindowButton $w={28} aria-label="Wiederherstellen"><Line d={restore} /></WindowButton>
        <WindowButton $w={33} aria-label="Schließen"><Line d={closeX} /></WindowButton>
      </TitleBar>

      <MenuBar>
        <Icon name="bricsDoc" size={9} />
        <MenuList>
          {menus.map((m) => (
            <button key={m}>{m}</button>
          ))}
        </MenuList>
        <WindowButton $w={12} aria-label="Zeichnung minimieren"><Line d="M3 7h3.500" w={8} /></WindowButton>
        <WindowButton $w={14} aria-label="Zeichnung wiederherstellen"><Line d={restore} w={7} /></WindowButton>
        <WindowButton $w={13} aria-label="Zeichnung schließen"><Line d={closeX} w={6} sw={2} /></WindowButton>
      </MenuBar>

      <Bar role="toolbar" aria-label="Werkzeuge">
        <Grip $w={11} />
        <Tools names={fileTools} />
        <Combo $w={200}>
          <LayerStates>
            <Icon name="bulb" size={9} />
            <Icon name="sun" size={9} />
            <Icon name="lock" size={9} />
            <Icon name="printer" size={9} />
          </LayerStates>
          <Swatch />
          <select aria-label="Layer"><option>0</option></select>
          <Icon name="chevron" size={7} />
        </Combo>
        <Tools names={editTools} />
        <Combo $w={103}>
          <select aria-label="Visueller Stil"><option>2D-Drahtmodell</option></select>
          <Icon name="chevron" size={7} />
        </Combo>
        <Separator />
        <Grip $w={15} />
        <Tools names={orderTools} />
        <Grip $w={14} />
        <Tools names={elementTools} />
      </Bar>

      <TabStrip>
        <AppButton aria-label="Anwendungsmenü">
          <Icon name="brics" size={13} />
          <Icon name="chevron" size={6} />
        </AppButton>
        <Tabs role="tablist">
          {ribbonTabs.map((t) => (
            <Tab key={t} role="tab" $active={t === "BBElemente"} aria-selected={t === "BBElemente"}>
              {t}
            </Tab>
          ))}
        </Tabs>
        <SearchBox>
          <Icon name="searchIcon" size={9} />
          <input aria-label="Suche" placeholder="Suche in der Multifunktionslei..." />
        </SearchBox>
        <ToolButton aria-label="Anpassen"><Icon name="customize" size={11} /></ToolButton>
      </TabStrip>

      <RibbonArea>
        <RibbonGrip><Grip $w={6} /></RibbonGrip>
        <Ribbon>
          <Group $w={363}>
            <GroupBody $pad={4}>
              <Big w={36} icon="create" lines={["Element", "anlegen"]} />
              <Big w={37} icon="pencil" lines={["Element", "bearbeiten"]} />
              <Big w={42} icon="pencils" lines={["Elemente", "bearbeiten"]} />
              <Big w={46} size={20} icon="reload" lines={["Elemente", "aktualisieren"]} />
              <Big w={46} icon="textPos" lines={["Textposition"]} split />
              <Big w={37} icon="explorer" lines={["Elemente", "Explorer"]} />
              <Small w={91} items={[["move", "Element verschieben"], ["extract", "Element extrahieren"], ["cross", "Elemente löschen"]]} />
              <Small w={14} items={[["help", ""], ["phone", ""]]} />
            </GroupBody>
            <GroupTitle>ELEMENTE</GroupTitle>
          </Group>
          <Group $w={88}>
            <GroupBody $pad={8}>
              <Big w={40} size={20} icon="section3d" lines={["3D-Schnitt"]} />
              <Big w={30} size={20} icon="ifc" lines={["IFC"]} />
            </GroupBody>
            <GroupTitle>BIM</GroupTitle>
          </Group>
          <Group $w={127}>
            <GroupBody $pad={8}>
              <Big w={43} size={20} icon="display" lines={["Darstellung"]} />
              <Small w={70} items={[["legend", "Legende"], ["stats", "Statistik"], ["protocol", "Protokolldatei"]]} />
            </GroupBody>
            <GroupTitle>DARSTELLUNG</GroupTitle>
          </Group>
          <Group $w={270}>
            <GroupBody $pad={10}>
              <Small w={98} items={[["alert", "Versionsinfo"], ["reloadAmber", "Programm neu laden"], ["menuReload", "BBSoft-Menü neu laden"]]} />
              <Small
                w={139}
                items={[["release", "Verwendete Netzlizenzen freigeben"], ["key", "Lizenz anfordern (Einzelplatz)"], ["remote", "BBSoft-Fernwartung"]]}
              />
              <Small w={14} items={[["helpAmber", ""]]} />
            </GroupBody>
            <GroupTitle>SUPPORT</GroupTitle>
          </Group>
        </Ribbon>
      </RibbonArea>

      <Body>
        <Main>
          <DocTabs>
            <DocTab>Start<button aria-label="Start schließen"><Line d={closeX} w={8} /></button></DocTab>
            <DocTab $active>20241128_antonschule*<button aria-label="Zeichnung schließen"><Line d={closeX} w={8} /></button></DocTab>
            <DocTab><button aria-label="Neue Zeichnung"><Line d="M4.500 1v7M1 4.500h7" w={8} /></button></DocTab>
          </DocTabs>
          <Canvas><Drawing /></Canvas>
          <LayoutTabs>
            <NavButton aria-label="Erstes Layout"><Line d="M2 1v7M7 1.500v6L4 4.500z" w={7} sw={2} /></NavButton>
            <NavButton aria-label="Vorheriges Layout"><Line d="M6 1.500v6L3 4.500z" w={7} sw={2} /></NavButton>
            <NavButton aria-label="Nächstes Layout"><Line d="M3 1.500v6l3-3z" w={7} sw={2} /></NavButton>
            <NavButton aria-label="Letztes Layout"><Line d="M7 1v7M2 1.500v6l3-3z" w={7} sw={2} /></NavButton>
            <GridMark aria-label="Layoutliste"><Line d="M1.500 1.500h6v6h-6zM4.500 1.500v6M1.500 4.500h6" w={6} /></GridMark>
            <LayoutTab $active>Model</LayoutTab>
            <LayoutTab>Layout1</LayoutTab>
            <LayoutTab aria-label="Neues Layout">+</LayoutTab>
          </LayoutTabs>
          <Command>
            <CommandEdge>
              <Line d={closeX} w={5} sw={2} />
              <Grip $w={5} />
            </CommandEdge>
            <CommandMain>
              <History>
                <Lines>
                  <div>Start der Führungslinie angeben:</div>
                  <div>Position der Beschriftung angeben:</div>
                </Lines>
                <ScrollTrack>
                  <button aria-label="Nach oben"><Line d="M2 6l2.500-2.500L7 6" w={8} sw={2} /></button>
                  <ScrollThumb />
                  <button aria-label="Nach unten"><Line d="M2 3.500L4.500 6 7 3.500" w={8} sw={2} /></button>
                </ScrollTrack>
              </History>
              <Prompt>
                Winkel der Beschriftung angeben:
                <input />
              </Prompt>
            </CommandMain>
          </Command>
        </Main>
        <Sidebar>
          <SidebarHandle />
          {["sliders", "layers", "clip", "library", "fx", "structure", "cloud"].map((n) => (
            <SideButton key={n} aria-label={n}>
              <Icon name={n} size={18} />
            </SideButton>
          ))}
        </Sidebar>
      </Body>

      <StatusBar>
        <StatusText>Bereit</StatusText>
        <Coordinates>4395757.100362, 5461275.753609, 0.000000</Coordinates>
        {cells.map(([label, w, state]) => (
          <Cell key={label} $w={w} $state={state}>
            <span>{label}</span>
          </Cell>
        ))}
        <ResizeCorner>
          <Svg width="5" height="3" viewBox="0 0 5 3"><path d="M0 0h5L2.500 3z" fill="#fff" /></Svg>
          <Svg width="6" height="6" viewBox="0 0 6 6"><path d="M5 0v6M3 2v4M1 4v2" stroke="#999" /></Svg>
        </ResizeCorner>
      </StatusBar>
    </Window>
  );
}
